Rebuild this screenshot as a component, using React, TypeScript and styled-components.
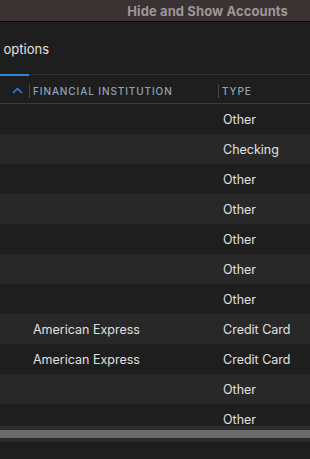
import React from "react";
import styled, { createGlobalStyle } from "styled-components";

const GlobalStyle = createGlobalStyle`
  html, body {
    margin: 0;
    padding: 0;
    background: #1e1e1e;
  }
  body {
    font-family: Inter, "Noto Sans", "Liberation Sans", sans-serif;
    -webkit-font-smoothing: antialiased;
  }
`;

const Window = styled.div`
  width: 310px;
  height: 459px;
  overflow: hidden;
  display: flex;
  flex-direction: column;
  background: #1e1e1e;
`;

const TitleBar = styled.div`
  height: 22px;
  flex: none;
  box-sizing: border-box;
  background: #3a3233;
  border-bottom: 1px solid #0d0d0d;
  display: flex;
  align-items: center;
  justify-content: flex-end;
  padding-right: 22px;
  color: #9c9696;
  font-size: 13px;
  font-weight: 700;
  letter-spacing: 0.1px;
`;

const Toolbar = styled.div`
  height: 52px;
  flex: none;
  box-sizing: border-box;
  padding-top: 2px;
  display: flex;
  align-items: center;
  overflow: hidden;
`;

const ToolbarLabel = styled.span`
  margin-left: -5px;
  color: #e2e2e2;
  font-size: 13px;
  white-space: nowrap;
`;

const TabLine = styled.div`
  height: 2px;
  flex: none;
  display: flex;
`;

const TabSegment = styled.div<{ $active?: boolean }>`
  height: ${(p) => (p.$active ? "2px" : "1px")};
  width: ${(p) => (p.$active ? "29px" : "auto")};
  flex: ${(p) => (p.$active ? "none" : "1")};
  background: ${(p) => (p.$active ? "#2f86d6" : "#313131")};
`;

const Row = styled.div<{ $striped?: boolean }>`
  height: 30px;
  flex: none;
  display: grid;
  grid-template-columns: 29px 189px 1fr;
  align-items: center;
  background: ${(p) => (p.$striped ? "#282828" : "#1e1e1e")};
  color: #e0e0e0;
  font-size: 12.5px;
  white-space: nowrap;
`;

const HeaderRow = styled(Row)`
  height: 28px;
  box-sizing: border-box;
  padding-top: 2px;
  border-bottom: 1px solid #3a3a3a;
  color: #8fa3b6;
  font-size: 10px;
  font-weight: 500;
  letter-spacing: 0.9px;
  text-transform: uppercase;
`;

const SortCell = styled.div`
  display: flex;
  justify-content: center;
  padding-left: 6px;
`;

const HeaderCell = styled.div`
  display: flex;
  align-items: center;
  height: 14px;
  border-left: 1px solid #464646;
  padding-left: 3px;
`;

const Cell = styled.div<{ $pad: number }>`
  padding-left: ${(p) => p.$pad}px;
`;

const Body = styled.div`
  height: 322px;
  flex: none;
  overflow: hidden;
  display: flex;
  flex-direction: column;
`;

const ScrollTrack = styled.div`
  height: 16px;
  flex: none;
  box-sizing: border-box;
  background: #2b2b2b;
  border-top: 1px solid #333;
  padding: 3px 0 4px;
`;

const ScrollThumb = styled.div`
  height: 8px;
  background: #6b6b6b;
`;

const Chevron = () => (
  <svg width="11" height="7" viewBox="0 0 11 7">
    <path d="M1 6 L5.5 1.5 L10 6" fill="none" stroke="#2f86d6" strokeWidth="1.5" />
  </svg>
);

const accounts = [
  { institution: "", type: "Other" },
  { institution: "", type: "Checking" },
  { institution: "", type: "Other" },
  { institution: "", type: "Other" },
  { institution: "", type: "Other" },
  { institution: "", type: "Other" },
  { institution: "", type: "Other" },
  { institution: "American Express", type: "Credit Card" },
  { institution: "American Express", type: "Credit Card" },
  { institution: "", type: "Other" },
  { institution: "", type: "Other" },
];

const App: React.FC = () => {
  return (
    <>
      <GlobalStyle />
      <Window>
        <TitleBar>Hide and Show Accounts</TitleBar>
        <Toolbar>
          <ToolbarLabel>r options</ToolbarLabel>
        </Toolbar>
        <TabLine>
          <TabSegment $active />
          <TabSegment />
        </TabLine>
        <HeaderRow>
          <SortCell>
            <Chevron />
          </SortCell>
          <HeaderCell>Financial Institution</HeaderCell>
          <HeaderCell>Type</HeaderCell>
        </HeaderRow>
        <Body>
          {accounts.map((a, i) => (
            <Row key={i} $striped={i % 2 === 1}>
              <div />
              <Cell $pad={4}>{a.institution}</Cell>
              <Cell $pad={5}>{a.type}</Cell>
            </Row>
          ))}
        </Body>
        <ScrollTrack>
          <ScrollThumb />
        </ScrollTrack>
      </Window>
    </>
  );
};

export default App;
